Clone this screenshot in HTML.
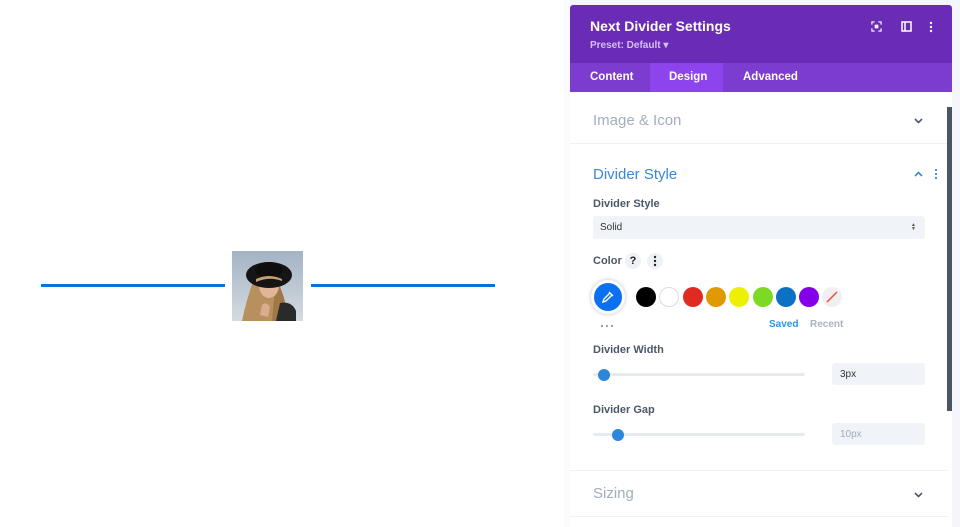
<!DOCTYPE html>
<html><head><meta charset="utf-8"><style>
*{box-sizing:border-box;margin:0;padding:0}
body{width:960px;height:527px;background:#fff;font-family:"Liberation Sans",sans-serif;position:relative;overflow:hidden}
.abs{position:absolute}
.lbl{font-size:11px;font-weight:bold;color:#4c5866}
.h{font-size:15px}
.sw{position:absolute;top:287px;width:20px;height:20px;border-radius:50%}
</style></head><body>
<div class="abs" style="left:41px;top:284px;width:184px;height:3px;background:#0c71e0"></div>
<div class="abs" style="left:311px;top:284px;width:184px;height:3px;background:#0c71e0"></div>
<svg class="abs" style="left:232px;top:251px" width="71" height="70" viewBox="0 0 71 70">
<defs><linearGradient id="bg" x1="0" y1="0" x2="0" y2="1"><stop offset="0" stop-color="#a3b3c4"/><stop offset="1" stop-color="#d5dbe1"/></linearGradient></defs>
<rect width="71" height="70" fill="url(#bg)"/>
<path d="M22 28 Q14 50 10 70 L40 70 Q44 50 50 30Z" fill="#b8905e"/>
<path d="M44 28 Q54 45 56 70 L40 70Z" fill="#a07848"/>
<ellipse cx="37" cy="34" rx="10" ry="13" fill="#e0b599"/>
<path d="M26 30 Q30 22 40 22 Q48 24 48 32 Q42 26 34 28Z" fill="#c59a66"/>
<ellipse cx="37" cy="24" rx="23" ry="13" fill="#151515"/>
<ellipse cx="37" cy="19" rx="14" ry="8" fill="#0e0e0e"/>
<path d="M24 28 Q37 22 50 28 L50 30 Q37 25 24 31Z" fill="#c8a070"/>
<path d="M48 52 Q60 50 64 60 L64 70 L44 70Z" fill="#2a2a2a"/>
<path d="M30 54 Q34 50 38 56 L36 66 L28 64Z" fill="#d9ad8e"/>
</svg>
<div class="abs" style="left:952px;top:0;width:8px;height:527px;background:#f4f6fb"></div>
<div class="abs" style="left:564px;top:0;width:6px;height:527px;background:#fafbfd"></div>
<div class="abs" style="left:570px;top:0;width:382px;height:5px;background:#f4f6fb"></div>
<div class="abs" style="left:570px;top:5px;width:382px;height:522px;background:#fff">
 <div style="height:58px;background:#6a2cb6;border-radius:3px 3px 0 0;position:relative">
  <div class="abs" style="left:20px;top:13px;color:#fff;font-size:14px;font-weight:bold">Next Divider Settings</div>
  <div class="abs" style="left:20px;top:35px;color:#d4c0ef;font-size:10px;font-weight:bold">Preset: Default ▾</div>
  <svg class="abs" style="left:301px;top:16px" width="11" height="11" viewBox="0 0 12 12" fill="none" stroke="#fff" stroke-width="1.3"><path d="M1 4V1h3M8 1h3v3M11 8v3H8M4 11H1V8"/><rect x="4" y="4" width="4" height="4" fill="#fff" stroke="none"/></svg>
  <svg class="abs" style="left:331px;top:16px" width="11" height="11" viewBox="0 0 11 11" fill="none" stroke="#fff" stroke-width="1.5"><rect x="1" y="1" width="9" height="9"/><path d="M4 1v9"/></svg>
  <svg class="abs" style="left:359px;top:16px" width="4" height="12"><circle cx="2" cy="2" r="1.2" fill="#fff"/><circle cx="2" cy="6" r="1.2" fill="#fff"/><circle cx="2" cy="10" r="1.2" fill="#fff"/></svg>
 </div>
 <div style="height:29px;background:#7b3ccf;position:relative;color:#fff;font-size:11.5px;font-weight:bold">
  <div class="abs" style="left:80px;top:0;width:73px;height:29px;background:#8d44ec"></div>
  <div class="abs" style="left:20px;top:8px">Content</div>
  <div class="abs" style="left:99px;top:8px">Design</div>
  <div class="abs" style="left:173px;top:8px">Advanced</div>
 </div>
 <div class="abs" style="left:377px;top:102px;width:5px;height:304px;background:#4a5663"></div>
 <div class="abs h" style="left:23px;top:107px;color:#a3adbc">Image &amp; Icon</div>
 <svg class="abs" style="left:344px;top:113px" width="9" height="6"><path d="M1 1l3.5 3.5L8 1" fill="none" stroke="#4c5866" stroke-width="1.6"/></svg>
 <div class="abs" style="left:0;top:138px;width:377px;height:1px;background:#eef1f5"></div>
 <div class="abs h" style="left:23px;top:161px;color:#3b86d6">Divider Style</div>
 <svg class="abs" style="left:344px;top:166px" width="9" height="6"><path d="M1 5l3.5-3.5L8 5" fill="none" stroke="#3b86d6" stroke-width="1.6"/></svg>
 <svg class="abs" style="left:364px;top:163px" width="4" height="12"><circle cx="2" cy="2" r="1.1" fill="#3b86d6"/><circle cx="2" cy="6" r="1.1" fill="#3b86d6"/><circle cx="2" cy="10" r="1.1" fill="#3b86d6"/></svg>
 <div class="abs lbl" style="left:23px;top:193px">Divider Style</div>
 <div class="abs" style="left:23px;top:211px;width:332px;height:23px;background:#f0f3f7;border-radius:3px"><span class="abs lbl" style="left:7px;top:6px;font-size:10px;font-weight:normal;color:#333">Solid</span><span class="abs" style="right:9px;top:7px;font-size:5px;line-height:4px;color:#555">▲<br>▼</span></div>
 <div class="abs lbl" style="left:23px;top:250px">Color</div>
 <div class="abs" style="left:55px;top:248px;width:16px;height:16px;border-radius:50%;background:#eef1f5;font-size:11px;font-weight:bold;text-align:center;line-height:16px;color:#222">?</div>
 <svg class="abs" style="left:77px;top:248px" width="16" height="16"><circle cx="8" cy="8" r="8" fill="#eef1f5"/><circle cx="8" cy="4" r="1.2" fill="#222"/><circle cx="8" cy="8" r="1.2" fill="#222"/><circle cx="8" cy="12" r="1.2" fill="#222"/></svg>
 <div class="abs" style="left:21px;top:275px;width:34px;height:34px;border-radius:50%;background:#0c71f0;border:3px solid #fff;box-shadow:0 0 4px rgba(0,0,0,.25)"></div>
 <svg class="abs" style="left:31px;top:285px" width="14" height="14" viewBox="0 0 14 14" fill="none" stroke="#fff" stroke-width="1.4"><path d="M2 12l1-3 6-6 2 2-6 6z M8 2l4 4"/></svg>
 <svg class="abs" style="left:30px;top:319px" width="14" height="4"><circle cx="2" cy="2" r="1.1" fill="#8d97a5"/><circle cx="7" cy="2" r="1.1" fill="#8d97a5"/><circle cx="12" cy="2" r="1.1" fill="#8d97a5"/></svg>
</div>
<div class="sw" style="left:636px;background:#000"></div>
<div class="sw" style="left:659px;background:#fff;border:1px solid #ddd"></div>
<div class="sw" style="left:683px;background:#e02b20"></div>
<div class="sw" style="left:706px;background:#e09900"></div>
<div class="sw" style="left:729px;background:#edf000"></div>
<div class="sw" style="left:753px;background:#7cda24"></div>
<div class="sw" style="left:776px;background:#0c71c3"></div>
<div class="sw" style="left:799px;background:#8300e9"></div>
<div class="sw" style="left:822px;background:#f0f0f0"><svg width="20" height="20"><path d="M5 15L15 5" stroke="#f04848" stroke-width="1.5"/></svg></div>
<div class="abs" style="left:769px;top:319px;font-size:10px;font-weight:bold;color:#2b96e0">Saved</div>
<div class="abs" style="left:810px;top:319px;font-size:10px;font-weight:bold;color:#a9b4c2">Recent</div>
<div class="abs lbl" style="left:593px;top:344px">Divider Width</div>
<div class="abs" style="left:593px;top:373px;width:212px;height:3px;background:#e6ebf1;border-radius:2px"></div>
<div class="abs" style="left:598px;top:369px;width:12px;height:12px;border-radius:50%;background:#2b87da"></div>
<div class="abs" style="left:832px;top:363px;width:93px;height:22px;background:#f0f3f7;border-radius:3px;font-size:10px;color:#333;padding:6px 8px">3px</div>
<div class="abs lbl" style="left:593px;top:404px">Divider Gap</div>
<div class="abs" style="left:593px;top:433px;width:212px;height:3px;background:#e6ebf1;border-radius:2px"></div>
<div class="abs" style="left:612px;top:429px;width:12px;height:12px;border-radius:50%;background:#2b87da"></div>
<div class="abs" style="left:832px;top:423px;width:93px;height:22px;background:#f0f3f7;border-radius:3px;font-size:10px;color:#a3adbc;padding:6px 8px">10px</div>
<div class="abs" style="left:570px;top:470px;width:377px;height:1px;background:#eef1f5"></div>
<div class="abs h" style="left:593px;top:485px;color:#a3adbc">Sizing</div>
<svg class="abs" style="left:914px;top:492px" width="9" height="6"><path d="M1 1l3.5 3.5L8 1" fill="none" stroke="#4c5866" stroke-width="1.6"/></svg>
<div class="abs" style="left:570px;top:516px;width:377px;height:1px;background:#eef1f5"></div>
</body></html>
